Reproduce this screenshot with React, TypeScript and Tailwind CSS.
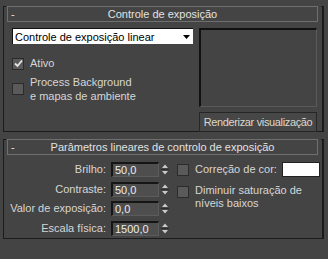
import React from 'react';

const font = { fontFamily: '"Liberation Sans", Arial, sans-serif' };

function RolloutHeader({ title }: { title: string }): JSX.Element {
  return (
    <div className="relative -mt-[8px] ml-[3px] flex h-[16px] w-[311px] items-center justify-center border border-[#6f6f6f] bg-[#444444] text-[#e2e2e2]">
      <span className="absolute left-[3px] top-[1px] text-[11px] leading-[12px]">-</span>
      <span className="text-[11px] leading-[14px]">{title}</span>
    </div>
  );
}

function Rollout({ title, children, className }: { title: string; children: React.ReactNode; className: string }): JSX.Element {
  return (
    <section className={`relative ml-[3px] w-[321px] border-b border-l border-r-2 border-[#1b1b1b] ${className}`}>
      <span className="absolute -left-px top-0 h-px w-[3px] bg-[#1b1b1b]" />
      <span className="absolute -right-[2px] top-0 h-px w-[3px] bg-[#1b1b1b]" />
      <RolloutHeader title={title} />
      {children}
    </section>
  );
}

function CheckBox({ checked }: { checked?: boolean }): JSX.Element {
  return (
    <div className="flex h-[12px] w-[12px] shrink-0 items-center justify-center border border-[#2b2b2b] bg-[#5a5a5a]">
      {checked && (
        <svg width="9" height="9" viewBox="0 0 9 9">
          <polyline points="1,4.5 3.5,7 8,1.5" fill="none" stroke="#e6e6e6" strokeWidth="1.8" />
        </svg>
      )}
    </div>
  );
}

function Spinner({ label, value }: { label: string; value: string }): JSX.Element {
  return (
    <div className="flex h-[15px] items-center">
      <span className="w-[103px] pr-[1px] text-right text-[11px] leading-[13px]">{label}</span>
      <div className="ml-[4px] h-[15px] w-[48px] border-l-2 border-t-2 border-b border-r border-l-[#151515] border-t-[#151515] border-b-[#5c5c5c] border-r-[#5c5c5c] bg-[#4e4e4e] pl-[2px] text-[11px] leading-[12px] text-[#ececec]">
        {value}
      </div>
      <svg className="ml-[2px]" width="8" height="15" viewBox="0 0 8 15">
        <polygon points="1,6 4,2.5 7,6" fill="#c9c9c9" />
        <line x1="0" y1="7.5" x2="8" y2="7.5" stroke="#2e2e2e" />
        <polygon points="1,9 4,12.5 7,9" fill="#c9c9c9" />
      </svg>
    </div>
  );
}

function App(): JSX.Element {
  return (
    <main className="h-[259px] w-[328px] overflow-hidden bg-[#444444] pt-[14px] text-[#d6d6d6]" style={font}>
      <Rollout title="Controle de exposição" className="h-[126px]">
        <div className="mt-[6px] flex pl-[8px]">
          <div className="flex w-[181px] flex-col">
            <div className="relative flex h-[16px] items-center border-l border-t border-[#111111] bg-white pl-[2px] text-[11px] leading-[14px] text-black">
              Controle de exposição linear
              <svg className="absolute right-[3px] top-[6px]" width="7" height="4" viewBox="0 0 7 4">
                <polygon points="0,0 7,0 3.5,4" fill="#000" />
              </svg>
            </div>
            <div className="mt-[13px] flex items-center gap-[6px]">
              <CheckBox checked />
              <span className="text-[11px] leading-[13px]">Ativo</span>
            </div>
            <div className="mt-[5px] flex items-center gap-[6px]">
              <CheckBox />
              <span className="text-[11px] leading-[14px]">
                Process Background
                <br />e mapas de ambiente
              </span>
            </div>
          </div>
          <div className="ml-[6px] flex w-[118px] flex-col">
            <div className="h-[79px] border-l-2 border-t-2 border-b border-r border-l-[#111111] border-t-[#111111] border-b-[#5a5a5a] border-r-[#5a5a5a]" />
            <div className="mt-[5px] flex h-[20px] items-center justify-center whitespace-nowrap border border-[#262626] bg-[#474747] text-[11px] leading-[13px] tracking-[-0.35px] text-[#dcd8cc]">
              Renderizar visualização
            </div>
          </div>
        </div>
      </Rollout>
      <Rollout title="Parâmetros lineares de controlo de exposição" className="mt-[15px] h-[100px]">
        <div className="mt-[7px] flex">
          <div className="flex flex-col gap-[4.5px]">
            <Spinner label="Brilho:" value="50,0" />
            <Spinner label="Contraste:" value="50,0" />
            <Spinner label="Valor de exposição:" value="0,0" />
            <Spinner label="Escala física:" value="1500,0" />
          </div>
          <div className="ml-[8px] flex flex-col">
            <div className="flex h-[15px] items-center">
              <CheckBox />
              <span className="ml-[6px] w-[87px] text-[11px] leading-[13px]">Correção de cor:</span>
              <div className="h-[15px] w-[38px] border border-[#222222] bg-white" />
            </div>
            <div className="mt-[7px] flex items-start">
              <div className="mt-[2px]">
                <CheckBox />
              </div>
              <span className="ml-[6px] text-[11px] leading-[13px]">
                Diminuir saturação de
                <br />
                níveis baixos
              </span>
            </div>
          </div>
        </div>
      </Rollout>
    </main>
  );
}

export default App;
